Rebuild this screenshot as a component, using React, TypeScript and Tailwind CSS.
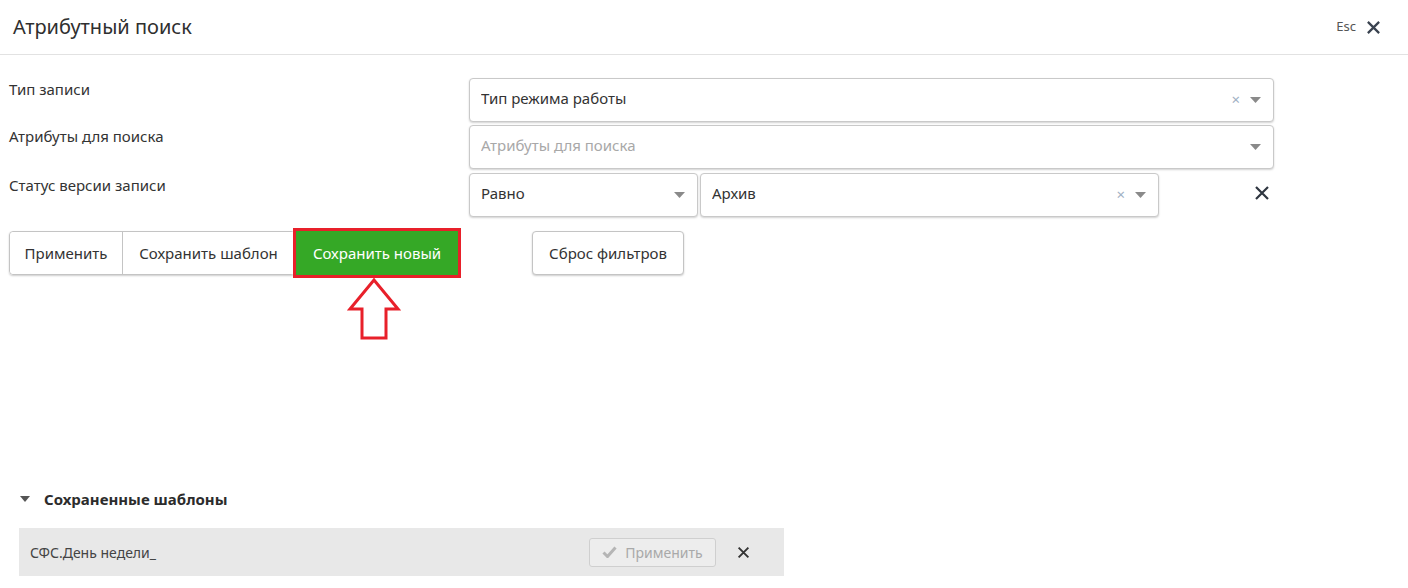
import { ReactNode } from 'react';

const Caret = () => (
  <svg width="11" height="6" viewBox="0 0 11 6" className="shrink-0">
    <path d="M0 0h11L5.5 6z" fill="#8a8a8a" />
  </svg>
);

const Clear = () => (
  <span className="text-[15px] leading-none text-[#9fb0c4] mr-[10px] mb-[2px]">×</span>
);

const CloseIcon = ({ size = 15, color = '#2f3640', width = 2.4 }: { size?: number; color?: string; width?: number }) => (
  <svg width={size} height={size} viewBox="0 0 16 16">
    <path d="M2 2l12 12M14 2L2 14" stroke={color} strokeWidth={width} strokeLinecap="butt" />
  </svg>
);

interface FieldProps {
  children: ReactNode;
  className?: string;
  clear?: boolean;
}

const Field = ({ children, className = '', clear }: FieldProps) => (
  <div
    className={`h-[44px] flex items-center pl-[11px] pr-[12px] border border-[#c9c9c9] rounded-[4px] bg-white shadow-[0_1px_2px_rgba(0,0,0,0.18)] ${className}`}
  >
    <div className="flex-1 text-[15px] truncate mb-[4px]">{children}</div>
    {clear && <Clear />}
    <Caret />
  </div>
);

export default function App() {
  return (
    <div
      className="relative w-full h-[588px] bg-white overflow-hidden text-[#333]"
      style={{ fontFamily: '"Noto Sans", "Open Sans", Arial, sans-serif' }}
    >
      {/* шапка */}
      <div className="h-[55px] border-b border-[#e2e2e2] flex items-center justify-between pl-[13px] pr-[27px]">
        <h1 className="text-[20px] text-[#2f2f2f]">Атрибутный поиск</h1>
        <div className="flex items-center gap-[10px]">
          <span className="text-[13px] text-[#555]">Esc</span>
          <CloseIcon size={15} color="#3a4350" width={2.4} />
        </div>
      </div>

      <div className="pl-[9px] pr-[134px] pt-[23px]">
        <div className="flex flex-col gap-[3px]">
          <div className="flex">
            <div className="w-[460px] text-[15px] leading-[22px]">Тип записи</div>
            <Field className="flex-1" clear>
              Тип режима работы
            </Field>
          </div>
          <div className="flex">
            <div className="w-[460px] text-[15px] leading-[22px]">Атрибуты для поиска</div>
            <Field className="flex-1">
              <span className="text-[#a8a8a8]">Атрибуты для поиска</span>
            </Field>
          </div>
          <div className="flex mt-[1px]">
            <div className="w-[460px] text-[15px] pt-[1px] leading-[22px]">Статус версии записи</div>
            <div className="flex-1 flex items-center gap-[2px]">
              <Field className="w-[229px]">Равно</Field>
              <Field className="w-[459px]" clear>
                Архив
              </Field>
              <div className="flex-1 flex justify-end pr-[4px] pb-[4px]">
                <CloseIcon size={16} color="#2f3640" width={2.2} />
              </div>
            </div>
          </div>
        </div>

        {/* кнопки */}
        <div className="flex items-center mt-[14px]">
          <div className="flex h-[44px] rounded-[4px] border border-[#c4c4c4] shadow-[0_1px_2px_rgba(0,0,0,0.2)]">
            <button className="w-[113px] text-[15px] border-r border-[#c4c4c4] rounded-l-[4px] bg-white">
              Применить
            </button>
            <button className="w-[171px] text-[15px] bg-white">Сохранить шаблон</button>
          </div>
          <div className="relative ml-[1px]">
            <button className="h-[44px] w-[162px] text-[15px] text-white bg-[#35a826] outline outline-[3px] outline-[#e8202a] outline-offset-[0px]">
              Сохранить новый
            </button>
            <svg
              className="absolute left-[51px] top-[47px]"
              width="54"
              height="64"
              viewBox="0 0 54 64"
            >
              <path
                d="M27 2L3 31h12v29h24V31h12z"
                fill="none"
                stroke="#e8202a"
                strokeWidth="3"
                strokeLinejoin="miter"
              />
            </svg>
          </div>
          <button className="ml-[74px] h-[44px] w-[152px] text-[15px] bg-white border border-[#c4c4c4] rounded-[4px] shadow-[0_1px_2px_rgba(0,0,0,0.2)]">
            Сброс фильтров
          </button>
        </div>
      </div>

      {/* сохраненные шаблоны */}
      <div className="mt-[213px] pl-[19px]">
        <div className="flex items-center h-[22px]">
          <svg width="10" height="6" viewBox="0 0 10 6" className="ml-[1px]">
            <path d="M0 0h10L5 6z" fill="#555" />
          </svg>
          <span className="ml-[14px] text-[15px] font-bold text-[#2c2c2c]">Сохраненные шаблоны</span>
        </div>
        <div className="mt-[18px] w-[765px] h-[48px] bg-[#e8e8e8] flex items-center pl-[11px] pr-[34px]">
          <span className="flex-1 text-[14px] text-[#444]">СФС.День недели_</span>
          <button className="h-[29px] w-[127px] flex items-center justify-center gap-[8px] border border-[#cfcfcf] rounded-[3px] bg-[#ededed] text-[14px] text-[#a9a9a9]">
            <svg width="15" height="12" viewBox="0 0 15 12">
              <path d="M1.5 6.5l4 4L13.5 1.5" fill="none" stroke="#b5b5b5" strokeWidth="3" />
            </svg>
            Применить
          </button>
          <div className="ml-[21px]">
            <CloseIcon size={13} color="#333" width={2.3} />
          </div>
        </div>
      </div>
    </div>
  );
}
